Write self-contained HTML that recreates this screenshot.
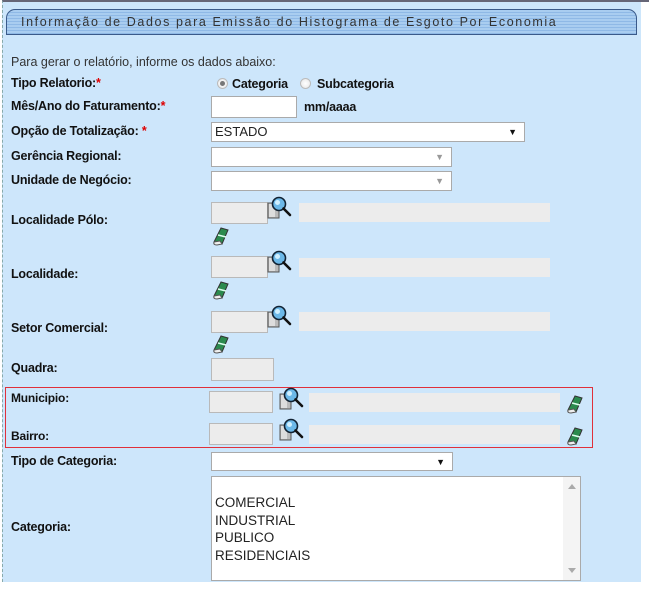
<!DOCTYPE html>
<html><head><meta charset="utf-8"><style>
*{box-sizing:border-box;margin:0;padding:0}
body{width:649px;height:590px;background:#fff;position:relative;overflow:hidden;font-family:"Liberation Sans",Arial,sans-serif;font-size:13px;color:#222}
#bg{position:absolute;left:2px;top:0;width:647px;height:582px;background:#cde6fb;border-left:1px dashed #8aa;border-top:2px solid #667}
#bgw{position:absolute;left:641px;top:2px;width:8px;height:580px;background:#fff}
.t{position:absolute;white-space:nowrap}
.b{font-weight:bold;color:#111;font-size:12.5px;letter-spacing:-0.2px}
.req{color:#d00}
#title{position:absolute;left:6px;top:9px;width:631px;height:26px;border:1px solid #3a5a8a;border-radius:9px 9px 0 0;background:repeating-linear-gradient(#a9cdf0 0 2px,#8fb9e6 2px 3px);}
#title span{position:absolute;left:14px;top:5px;font-family:"Liberation Sans",sans-serif;font-size:12.5px;letter-spacing:1.6px;color:#333}
.in{position:absolute;background:#fff;border:1px solid #aaa}
.g{position:absolute;background:#ececec;border:1px solid #b9b9b9}
.gl{position:absolute;background:#ececec}
.sel{position:absolute;background:#fff;border:1px solid #aaa;font-family:"Liberation Sans",sans-serif;font-size:13px;padding-left:3px;line-height:18px}
.sel i{position:absolute;right:7px;top:0;font-style:normal;font-size:9px;color:#111}
.sel i.l{color:#999}
.rad{position:absolute;width:11px;height:11px;border-radius:50%;border:1px solid #bbb;background:radial-gradient(#fff,#e5e5e5)}
#box{position:absolute;left:5px;top:387px;width:588px;height:61px;border:1px solid #e0303a}
#list{position:absolute;left:211px;top:476px;width:370px;height:105px;background:#fff;border:1px solid #aaa;font-family:"Liberation Sans",sans-serif;font-size:13.5px;line-height:17.5px;padding:17px 0 0 3px;color:#222}
#list .sb{position:absolute;right:0;top:0;width:17px;height:103px;background:#f4f4f4}
</style></head><body>
<div id="bg"></div><div id="bgw"></div>
<div id="title"><span>Informação de Dados para Emissão do Histograma de Esgoto Por Economia</span></div>

<div class="t" style="left:11px;top:55px;font-size:12.5px;color:#333">Para gerar o relatório, informe os dados abaixo:</div>
<div class="t b" style="left:11px;top:76px">Tipo Relatorio:<span class="req">*</span></div>
<div class="rad" style="left:217px;top:78px"><div style="width:5px;height:5px;border-radius:50%;background:#777;margin:2px"></div></div>
<div class="t b" style="left:232px;top:77px">Categoria</div>
<div class="rad" style="left:300px;top:78px"></div>
<div class="t b" style="left:317px;top:77px">Subcategoria</div>

<div class="t b" style="left:11px;top:99px">Mês/Ano do Faturamento:<span class="req">*</span></div>
<div class="in" style="left:211px;top:96px;width:86px;height:22px"></div>
<div class="t b" style="left:304px;top:100px">mm/aaaa</div>

<div class="t b" style="left:11px;top:124px">Opção de Totalização: <span class="req">*</span></div>
<div class="sel" style="left:211px;top:122px;width:314px;height:20px">ESTADO<i>▼</i></div>

<div class="t b" style="left:11px;top:149px">Gerência Regional:</div>
<div class="sel" style="left:211px;top:147px;width:241px;height:20px"><i class="l">▼</i></div>
<div class="t b" style="left:11px;top:173px">Unidade de Negócio:</div>
<div class="sel" style="left:211px;top:171px;width:241px;height:20px"><i class="l">▼</i></div>

<svg width="0" height="0" style="position:absolute"><defs>
<g id="mag"><rect x="1" y="8" width="11" height="15" fill="#bbb" stroke="#555" stroke-width="1"/><rect x="2" y="9" width="6" height="13" fill="#ddd"/><circle cx="12" cy="9" r="6.5" fill="#6cb8e8" stroke="#123" stroke-width="1.6"/><circle cx="10.5" cy="7.5" r="2.5" fill="#cfefff"/><line x1="16.5" y1="13.5" x2="23" y2="20" stroke="#111" stroke-width="2.6" stroke-linecap="round"/></g>
<g id="era"><path d="M3 18 L10 4 L17 6 L11 20 Z" fill="#2b8a4e" stroke="#333" stroke-width="1"/><path d="M7 11 L15 13" stroke="#dfe" stroke-width="1.5"/><path d="M3 18 Q2 21 6 21 L11 20 L9 17 Z" fill="#eee" stroke="#555" stroke-width="1"/></g>
</defs></svg>

<div class="t b" style="left:11px;top:213px">Localidade Pólo:</div>
<div class="g" style="left:211px;top:202px;width:57px;height:22px"></div>
<svg style="position:absolute;left:267px;top:195px" width="28" height="26"><use href="#mag"/></svg>
<div class="gl" style="left:299px;top:203px;width:251px;height:19px"></div>
<svg style="position:absolute;left:211px;top:224px" width="20" height="22"><use href="#era"/></svg>

<div class="t b" style="left:11px;top:267px">Localidade:</div>
<div class="g" style="left:211px;top:256px;width:57px;height:22px"></div>
<svg style="position:absolute;left:267px;top:249px" width="28" height="26"><use href="#mag"/></svg>
<div class="gl" style="left:299px;top:258px;width:251px;height:19px"></div>
<svg style="position:absolute;left:211px;top:278px" width="20" height="22"><use href="#era"/></svg>

<div class="t b" style="left:11px;top:321px">Setor Comercial:</div>
<div class="g" style="left:211px;top:311px;width:57px;height:22px"></div>
<svg style="position:absolute;left:267px;top:304px" width="28" height="26"><use href="#mag"/></svg>
<div class="gl" style="left:299px;top:312px;width:251px;height:19px"></div>
<svg style="position:absolute;left:211px;top:332px" width="20" height="22"><use href="#era"/></svg>

<div class="t b" style="left:11px;top:361px">Quadra:</div>
<div class="g" style="left:211px;top:358px;width:63px;height:23px"></div>

<div id="box"></div>
<div class="t b" style="left:11px;top:391px;font-size:12px">Municipio:</div>
<div class="g" style="left:209px;top:391px;width:64px;height:22px"></div>
<svg style="position:absolute;left:279px;top:386px" width="28" height="26"><use href="#mag"/></svg>
<div class="gl" style="left:309px;top:393px;width:251px;height:19px"></div>
<svg style="position:absolute;left:565px;top:392px" width="20" height="22"><use href="#era"/></svg>

<div class="t b" style="left:11px;top:429px;font-size:12px">Bairro:</div>
<div class="g" style="left:209px;top:423px;width:64px;height:22px"></div>
<svg style="position:absolute;left:279px;top:417px" width="28" height="26"><use href="#mag"/></svg>
<div class="gl" style="left:309px;top:425px;width:251px;height:19px"></div>
<svg style="position:absolute;left:565px;top:424px" width="20" height="22"><use href="#era"/></svg>

<div class="t b" style="left:11px;top:454px">Tipo de Categoria:</div>
<div class="sel" style="left:211px;top:452px;width:242px;height:19px"><i>▼</i></div>

<div class="t b" style="left:11px;top:520px">Categoria:</div>
<div id="list">COMERCIAL<br>INDUSTRIAL<br>PUBLICO<br>RESIDENCIAIS
<div class="sb"><div style="position:absolute;left:5px;top:7px;width:0;height:0;border-left:4px solid transparent;border-right:4px solid transparent;border-bottom:5px solid #aaa"></div><div style="position:absolute;left:5px;bottom:7px;width:0;height:0;border-left:4px solid transparent;border-right:4px solid transparent;border-top:5px solid #aaa"></div></div></div>
</body></html>
